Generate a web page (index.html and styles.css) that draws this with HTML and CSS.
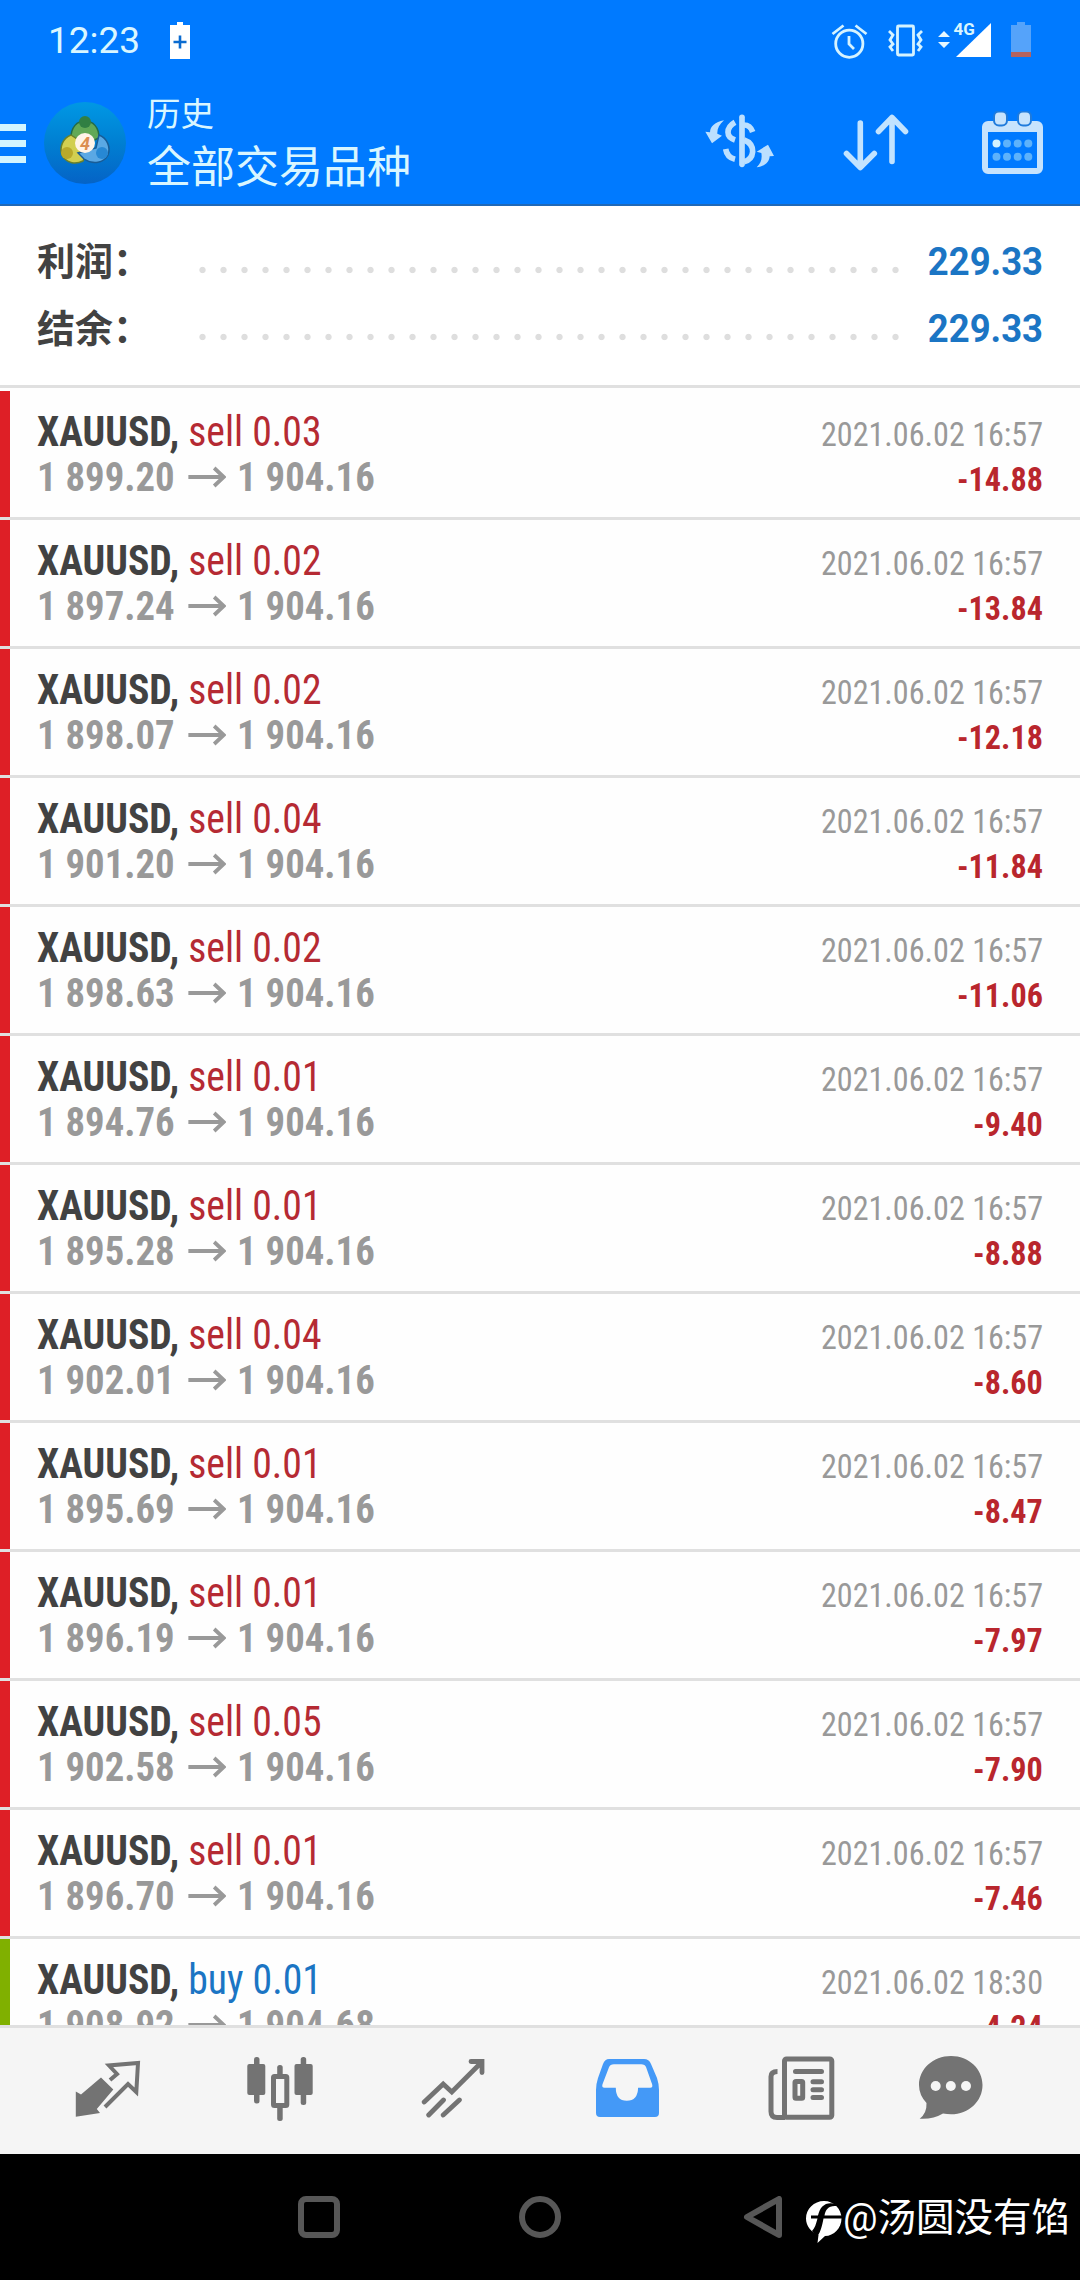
FILE: index.html
```html
<!DOCTYPE html>
<html lang="zh-CN">
<head>
<meta charset="utf-8">
<title>历史</title>
<link rel="stylesheet" href="styles.css">
</head>
<body>
<div class="screen">
  <header class="header">
    <div class="status">
      <span class="clock">12:23</span>
      <svg class="saver" width="20" height="37" viewBox="0 0 20 37"><path fill="#fff" d="M7 0h6v3h7v34H0V3h7z"/><path stroke="#0a6bd0" stroke-width="2.6" d="M10 13.500v13M3.500 20h13"/></svg>
      <svg class="status-icons" width="206" height="42" viewBox="828 20 206 42" fill="none" stroke="#d5f3ff" stroke-width="2.800">
        <circle cx="849.300" cy="43.700" r="13.600"/><path d="M849 36v8l5 5M832.500 34l11-8.500M855.500 25.500l11 8.500"/>
        <rect x="897.500" y="26" width="16" height="29" rx="1"/><path d="M889 31l4 4-3 5 3 4-3 3 3 4M922 31l-4 4 3 5-3 4 3 3-3 4"/>
        <path stroke="none" fill="#e6f8ff" d="M944 31l6 6h-12zM938 42h12l-6 6z"/>
        <path stroke="none" fill="#fff" d="M991 23v34h-35z"/>
        <text x="953.500" y="35" class="net">4G</text>
        <path stroke="none" fill="#55a3fa" d="M1017 22h8v3h6v27h-20V25h6z"/><path stroke="none" fill="#b4635f" d="M1011 52h20v5h-20z"/>
      </svg>
    </div>
    <div class="toolbar">
      <svg width="26" height="40" viewBox="0 0 26 40"><path fill="#d3f5ff" d="M0 1h26v7H0zM0 17h26v7H0zM0 33h26v7H0z"/></svg>
      <svg class="logo" width="84" height="84" viewBox="0 0 84 84">
        <defs>
          <linearGradient id="sky" x1="0" y1="0" x2="0" y2="1"><stop offset="0" stop-color="#0098e4"/><stop offset=".5" stop-color="#007fd2"/><stop offset="1" stop-color="#0563c6"/></linearGradient>
        </defs>
        <circle cx="42" cy="42" r="41" fill="url(#sky)"/>
        <g stroke-width="1.500">
          <path fill="#62a957" stroke="#246b46" d="M28 37c0-11 6-17 14-17s14 6 14 17l-7 3H34z"/>
          <path fill="#d2cf50" stroke="#69802b" d="M28 34c-8 3-12 12-9 20 4 8 13 10 21 6l4-8-10-14z"/>
          <path fill="#5aa8e4" stroke="#185c96" d="M56 34c8 3 12 12 9 20-4 8-15 10-24 4l-6-6 18-5z"/>
        </g>
        <circle cx="42" cy="21" r="6" fill="#317f43"/><circle cx="24" cy="52" r="6" fill="#b9a92a"/><circle cx="59" cy="52" r="6" fill="#2788d4"/>
        <circle cx="42" cy="42" r="10" fill="#fff4e8"/>
        <text x="37" y="48.500" class="four">4</text>
      </svg>
      <div class="titles"><div class="title">历史</div><div class="subtitle">全部交易品种</div></div>
      <svg class="money" width="74" height="60" viewBox="70 340 222 180" fill="none" stroke="#bce0ff" stroke-width="17">
        <path stroke-linecap="round" d="M187 353v141"/>
        <path d="M166 368Q145 380 145 398Q145 414 166 421M193 376Q212 376 219 397M193 421Q219 430 219 456Q217 480 193 486M138 448Q142 473 166 479"/>
        <path fill="#bce0ff" stroke="none" d="M133 362C106 367 92 380 91 398L77 396L97 431L127 408L113 402C112 388 119 374 133 362zM231 503C256 500 269 487 270 470L283 469L265 435L231 456L245 460C248 477 244 490 231 503z"/>
      </svg>
      <svg class="sort" width="66" height="60" viewBox="843 113 66 60" fill="none" stroke="#c2e3ff" stroke-width="5.600" stroke-linecap="round" stroke-linejoin="round"><path d="M860.300 123v44M846.500 153.500l13.800 14 14-14M892 161.500v-44M878.500 131.500l13.500-14 13.500 14"/></svg>
      <svg class="calendar" width="62" height="64" viewBox="981 110 62 64">
        <rect x="985" y="123" width="55" height="47" rx="3" fill="none" stroke="#c6e3fd" stroke-width="6"/><path fill="#c6e3fd" d="M984 122h57v9h-57z"/>
        <g fill="#c6e3fd" stroke="#1f7bdc" stroke-width="2"><rect x="994" y="110.500" width="13" height="14" rx="5"/><rect x="1018" y="110.500" width="13" height="14" rx="5"/></g>
        <g fill="#5db2fb"><circle cx="996.500" cy="142.500" r="4" fill="#d3f2ff"/><circle cx="1007" cy="142.500" r="4"/><circle cx="1017.700" cy="142.500" r="4"/><circle cx="1028.300" cy="142.500" r="4"/><circle cx="996.500" cy="155.700" r="4"/><circle cx="1007" cy="155.700" r="4"/><circle cx="1017.700" cy="155.700" r="4"/><circle cx="1028.300" cy="155.700" r="4"/></g>
      </svg>
    </div>
  </header>

  <section class="summary">
    <div class="sum-row"><span class="label">利润：</span><span class="dots"></span><span class="amount">229.33</span></div>
    <div class="sum-row"><span class="label">结余：</span><span class="dots"></span><span class="amount">229.33</span></div>
  </section>

  <main class="deals" id="deals"></main>

  <nav class="tabs">
    <svg width="66" height="66" viewBox="75 2056 66 66" fill="#737373"><path d="M75.800 2091.500l5.200 3 20-17 12.300 12-16.500 19.500 3.200 4-24.200 3.700z"/><path fill="none" stroke="#737373" stroke-width="4" d="M110 2080l7-6-8-8.500 29-2.500-1.700 29-8.300-8-23 23"/></svg>
    <svg width="68" height="66" viewBox="247 2056 68 66" fill="#737373"><rect x="254" y="2057" width="5.500" height="46.500" rx="2.500"/><rect x="247.300" y="2064" width="18" height="31" rx="2"/><rect x="277.200" y="2065" width="5.500" height="56" rx="2.500"/><rect x="273.500" y="2076.500" width="13.300" height="29" fill="#f5f5f5" stroke="#737373" stroke-width="5" rx="1"/><rect x="300.700" y="2057" width="5.500" height="48" rx="2.500"/><rect x="294.500" y="2064" width="18.200" height="31" rx="2"/></svg>
    <svg width="66" height="66" viewBox="421 2056 66 66" fill="none" stroke="#737373" stroke-width="4.800" stroke-linecap="round"><path d="M424.200 2102l19-18 8.600 8 30-30M471 2061.500h11v11M428.700 2115l14.800-15M443.200 2115l16.200-15"/></svg>
    <svg class="tab-history" width="66" height="66" viewBox="595 2056 66 66"><path fill="#4499f7" fill-rule="evenodd" d="M609 2059h35q5 0 7 5l6 14q2 6 2 12v23q0 4-4 4h-55q-4 0-4-4v-23q0-6 2-12l5-14q2-5 6-5zM614 2064.300q-4 0-5 3l-6.500 17q-1 3.500 2 3.500h11.300q0 13 11 13t11.300-13h12q3 0 2-3.500l-6-17q-1-3-5-3z"/></svg>
    <svg width="68" height="66" viewBox="767 2056 68 66" fill="none" stroke="#737373" stroke-width="5"><rect x="784.500" y="2059" width="47.300" height="58.300" rx="2"/><path d="M777.500 2071.500q-6.500 0-6.500 5v35q0 6 6 6h8"/><path stroke-linecap="round" d="M795.500 2071.500h26M813 2081.700h8.500M813 2089.800h8.500M813 2097.500h8.500"/><rect x="795" y="2081.500" width="7.700" height="16.700" rx="1"/></svg>
    <svg class="tab-chat" width="66" height="66" viewBox="918 2056 66 66"><path fill="#737373" d="M951 2056c18 0 31.500 13 31.500 29s-13.500 29.300-31.500 29.300q-4 0-8-.8-10 6-23.300 5.200 7.300-5.700 6.800-15.700-7.500-8-7.500-18c0-16 14-29 32-29z"/><g fill="#f5f5f5"><circle cx="935.700" cy="2086" r="5"/><circle cx="950.800" cy="2086" r="5"/><circle cx="966" cy="2086" r="5"/></g></svg>
  </nav>

  <footer class="system">
    <svg class="recent" width="42" height="42" viewBox="0 0 42 42"><rect x="3" y="3" width="36" height="36" rx="5"/></svg>
    <svg class="home" width="42" height="42" viewBox="0 0 42 42"><circle cx="21" cy="21" r="18"/></svg>
    <svg class="back" width="40" height="42" viewBox="0 0 40 42"><path stroke-linejoin="round" d="M36 3v36L4 21z"/></svg>
    <svg class="mark" width="36" height="42" viewBox="0 0 36 42"><path class="mark-fill" d="M18 0c10 0 17.500 8 17.500 17.500S28 35 19 35L11.500 42l1-8C5 31 0 25 0 17.500 0 8 8 0 18 0z"/><path fill="#000" stroke="none" d="M30 3C20 0 14 5 12 14.500H5v3h6.500C10 23 9 27 6 30l5 6c4-6 5-11 6.500-18.500H36v-3H18.500c1-6 4-10 11.500-9.500z"/></svg>
    <span class="handle">@汤圆没有馅</span>
  </footer>
</div>
<script src="deals.js"></script>
</body>
</html>
```
FILE: deals.js
```js
const deals = [
  ["sell", "0.03", "1 899.20", "1 904.16", "16:57", "-14.88"],
  ["sell", "0.02", "1 897.24", "1 904.16", "16:57", "-13.84"],
  ["sell", "0.02", "1 898.07", "1 904.16", "16:57", "-12.18"],
  ["sell", "0.04", "1 901.20", "1 904.16", "16:57", "-11.84"],
  ["sell", "0.02", "1 898.63", "1 904.16", "16:57", "-11.06"],
  ["sell", "0.01", "1 894.76", "1 904.16", "16:57", "-9.40"],
  ["sell", "0.01", "1 895.28", "1 904.16", "16:57", "-8.88"],
  ["sell", "0.04", "1 902.01", "1 904.16", "16:57", "-8.60"],
  ["sell", "0.01", "1 895.69", "1 904.16", "16:57", "-8.47"],
  ["sell", "0.01", "1 896.19", "1 904.16", "16:57", "-7.97"],
  ["sell", "0.05", "1 902.58", "1 904.16", "16:57", "-7.90"],
  ["sell", "0.01", "1 896.70", "1 904.16", "16:57", "-7.46"],
  ["buy", "0.01", "1 908.92", "1 904.68", "18:30", "-4.24"]
];
document.getElementById("deals").innerHTML = deals.map(([side, lots, open, close, time, profit]) => `
  <article class="deal ${side}">
    <div class="line"><span class="name"><b>XAUUSD,</b> <span class="side">${side} ${lots}</span></span><span class="date">2021.06.02 ${time}</span></div>
    <div class="line"><span class="price"><span class="num">${open}</span><svg class="arrow" width="40" height="22" viewBox="0 0 40 22"><path d="M0 11h37M27.500 2l10 9-10 9"/></svg><span class="num">${close}</span></span><span class="profit">${profit}</span></div>
  </article>`).join("");
```
FILE: styles.css
```css
* { box-sizing: border-box; }
body { margin: 0; background: #fff; font-family: Roboto, "Noto Sans CJK SC", sans-serif; }
svg { display: block; flex: none; }
.screen { display: flex; flex-direction: column; width: 1080px; height: 2280px; overflow: hidden; }

.header { height: 206px; flex: none; background: #007aff; border-bottom: 2px solid #2069b8; color: #d9f6ff; }
.status { display: flex; align-items: center; height: 81px; padding: 0 46px 0 48px; }
.clock { width: 122px; font-size: 37px; line-height: 44px; }
.status-icons { margin-left: auto; overflow: visible; }
.net { font: bold 17px Roboto, sans-serif; fill: #d9f6ff; stroke: none; }
.four { font: bold italic 18px Roboto, sans-serif; fill: #db8e50; }
.toolbar { display: flex; align-items: center; height: 123px; }
.logo { margin-left: 17px; }
.titles { margin-left: 20px; padding-top: 11px; width: 556px; }
.title { font-size: 33.500px; line-height: 40px; }
.subtitle { font-size: 44px; line-height: 67px; }
.sort { margin-left: 66px; }
.calendar { margin-left: 72px; }

.summary { height: 182px; flex: none; padding: 22px 37px 0; border-bottom: 3px solid #e0e0e0; }
.sum-row { display: flex; align-items: center; height: 67px; }
.label { width: 162px; padding-bottom: 7px; font-size: 38px; font-weight: 700; color: #424242; white-space: nowrap; }
.dots { width: 714px; height: 8px; margin-top: 17px; margin-left: -7px; background: radial-gradient(circle at 10.500px 4px, #dedede 2.700px, transparent 3.600px) 0 0 / 21px 8px; }
.amount { margin-left: auto; font-size: 38px; font-weight: 700; color: #1b75c4; transform: scaleX(.96); transform-origin: right; }

.deals { flex: 1; min-height: 0; overflow: hidden; padding-top: 3px; background: #fefefe; }
.deal { height: 129px; padding: 17px 37px 0; border-bottom: 3px solid #e0e0e0; background: #fefefe; box-shadow: inset 10px 0 #de1f26; }
.deal.buy { box-shadow: inset 10px 0 #80b000; }
.line { display: flex; justify-content: space-between; align-items: baseline; height: 45px; line-height: 48px; white-space: nowrap; font-family: "Roboto Condensed", Roboto, sans-serif; font-stretch: 75%; }

.name, .price { transform: scaleX(.945); transform-origin: left; }
.date, .profit { transform: scaleX(.945); transform-origin: right; }
.name { font-size: 42px; }
.name b { color: #424242; }
.side { color: #b52a33; }
.buy .side { color: #1b75c4; }
.date { font-size: 34px; color: #999; }
.price { display: flex; font-size: 41px; font-weight: 700; color: #999; }
.arrow { align-self: center; margin: 0 12px 0 14px; fill: none; stroke: #999; stroke-width: 4; }
.profit { font-size: 34px; font-weight: 700; color: #b9262d; }

.tabs { height: 129px; flex: none; display: flex; padding: 28px 0 0 75px; background: #f5f5f5; border-top: 3px solid #e0e0e0; gap: 106px; }
.tab-history { margin-left: 2px; }
.tab-chat { margin-left: -23px; }
.system { height: 126px; flex: none; display: flex; align-items: center; padding-left: 298px; background: #000; fill: none; stroke: #575757; stroke-width: 6; }
.home { margin-left: 179px; }
.back { margin-left: 182px; }
.mark { margin: 10px 0 0 23px; }
.mark-fill { fill: #fff; stroke: none; }
.handle { margin-left: 1px; padding-bottom: 6px; font-size: 38.500px; color: #fff; white-space: nowrap; }
```
